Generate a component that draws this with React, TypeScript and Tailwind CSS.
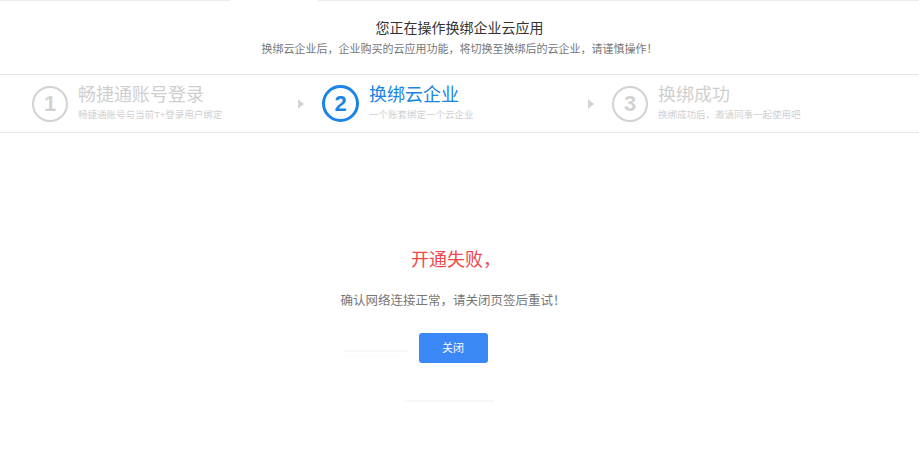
import React from "react";

const font = { fontFamily: '"Liberation Sans", "Noto Sans CJK SC", sans-serif' };

function Arrow() {
  return (
    <svg width="6" height="10" viewBox="0 0 6 10" className="block">
      <path d="M0 0 L6 5 L0 10 Z" fill="#d4d4d4" />
    </svg>
  );
}

type StepProps = {
  n: number;
  title: string;
  sub: string;
  active?: boolean;
  arrow?: boolean;
};

function Step({ n, title, sub, active, arrow }: StepProps) {
  return (
    <div className="flex w-[290px] shrink-0 items-center">
      <div
        className={
          active
            ? "flex h-[37px] w-[37px] shrink-0 items-center justify-center rounded-full border-[3px] border-[#1a85e6] text-[22px] font-bold leading-none text-[#1a85e6]"
            : "flex h-[36px] w-[36px] shrink-0 items-center justify-center rounded-full border-[2px] border-[#d2d2d2] text-[22px] font-bold leading-none text-[#d2d2d2]"
        }
        style={{ fontFamily: '"Liberation Sans", Arial, sans-serif' }}
      >
        {n}
      </div>
      <div className="ml-[10px] flex flex-col">
        <div
          className={
            active
              ? "mt-[-2px] text-[18px] leading-[22px] text-[#1a85e6]"
              : "mt-[-2px] text-[18px] leading-[22px] text-[#cfcfcf]"
          }
        >
          {title}
        </div>
        <div className="mt-[3px] text-[9.5px] leading-[12px] text-[#d0d0d0]">{sub}</div>
      </div>
      {arrow && (
        <div className="ml-auto mr-[18px]">
          <Arrow />
        </div>
      )}
    </div>
  );
}

export default function App() {
  return (
    <div className="relative h-[464px] w-[919px] overflow-hidden bg-white" style={font}>
      <div className="flex h-px w-full">
        <div className="h-px w-[230px] bg-[#ececec]" />
        <div className="h-px w-[88px]" />
        <div className="h-px flex-1 bg-[#ececec]" />
      </div>

      <div className="flex flex-col items-center pt-[17px]">
        <div className="text-[14px] leading-[20px] text-[#333]">您正在操作换绑企业云应用</div>
        <div className="mt-[3px] text-[11px] leading-[16px] text-[#777]">
          换绑云企业后，企业购买的云应用功能，将切换至换绑后的云企业，请谨慎操作！
        </div>
      </div>

      <div className="mt-[17px] flex h-[59px] items-center border-y border-[#e6e6e6] pl-[32px]">
        <Step n={1} title="畅捷通账号登录" sub="畅捷通账号与当前T+登录用户绑定" arrow />
        <Step n={2} title="换绑云企业" sub="一个账套绑定一个云企业" active arrow />
        <Step n={3} title="换绑成功" sub="换绑成功后，邀请同事一起使用吧" />
      </div>

      <div className="mr-[13px] flex flex-col items-center pt-[115px]">
        <div className="pl-[6px] text-[18px] leading-[24px] text-[#f0474a]">开通失败，</div>
        <div className="mt-[21px] text-[12.5px] leading-[16px] text-[#777]">
          确认网络连接正常，请关闭页签后重试！
        </div>
        <div className="relative mt-[24px]">
          <button className="flex h-[30px] w-[69px] items-center justify-center rounded-[3px] bg-[#3a87f6] text-[11px] text-white">
            关闭
          </button>
          <div className="absolute left-[-76px] top-[17px] h-[2px] w-[66px] bg-[#f8f8f8]" />
          <div className="absolute left-[-76px] top-[23px] h-[1px] w-[60px] bg-[#fafafa]" />
        </div>
        <div className="mt-[37px] ml-[-8px] h-[2px] w-[90px] bg-[#f5f8f6]" />
      </div>
    </div>
  );
}
